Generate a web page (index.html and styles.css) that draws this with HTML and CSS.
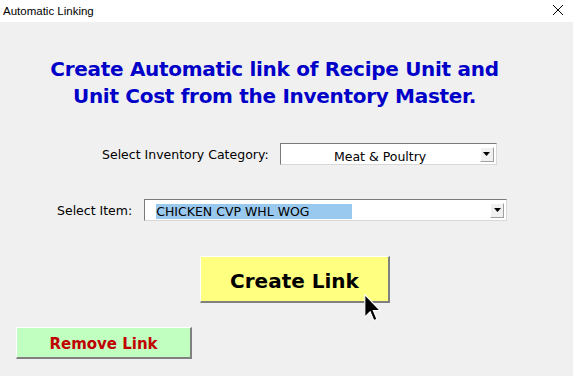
FILE: index.html
```html
<!DOCTYPE html>
<html lang="en">

<head>
    <meta charset="UTF-8">
    <meta name="viewport" content="width=device-width, initial-scale=1.0">
    <title>Automatic Linking</title>
    <link rel="stylesheet" href="styles.css">
</head>

<body>
    <div class="window">
        <div class="titlebar">
            <span class="title">Automatic Linking</span>
            <span class="close">
                <svg width="12" height="12" viewBox="0 0 12 12">
                    <path d="M1 1 L11 11 M11 1 L1 11" stroke="#000" stroke-width="1" fill="none" />
                </svg>
            </span>
        </div>

        <div class="content">
            <h1 class="heading">Create Automatic link of Recipe Unit and<br>Unit Cost from the Inventory Master.</h1>

            <div class="row row-category">
                <label class="label">Select Inventory Category:</label>
                <div class="combo combo-category">
                    <span class="combo-text centered">Meat &amp; Poultry</span>
                    <span class="drop"><svg width="7" height="4" viewBox="0 0 7 4"><path d="M0 0 H7 L3.5 4 Z" fill="#000" /></svg></span>
                </div>
            </div>

            <div class="row row-item">
                <label class="label">Select Item:</label>
                <div class="combo combo-item">
                    <span class="combo-text"><span class="selected">CHICKEN CVP WHL WOG</span></span>
                    <span class="drop"><svg width="7" height="4" viewBox="0 0 7 4"><path d="M0 0 H7 L3.5 4 Z" fill="#000" /></svg></span>
                </div>
            </div>

            <div class="create-wrap">
                <button class="btn btn-create">Create Link</button>
            </div>

            <button class="btn btn-remove">Remove Link</button>
        </div>

        <svg class="cursor" width="17" height="28" viewBox="0 0 12 20">
            <path d="M0.5 0.5 L0.5 16.5 L4.3 12.7 L7 19 L9.2 18 L6.6 11.8 L11.5 11.8 Z" fill="#000" stroke="#fff" stroke-width="0.8" stroke-linejoin="miter" />
        </svg>
    </div>
</body>

</html>
```

FILE: styles.css
```css
body {
    margin: 0;
    background-color: #f0f0f0;
    font-family: 'DejaVu Sans', Verdana, sans-serif;
}

.window {
    position: relative;
    width: 573px;
    height: 376px;
    overflow: hidden;
}

.titlebar {
    height: 22px;
    background-color: #fff;
    display: flex;
    align-items: center;
    justify-content: space-between;
    padding: 0 9px 0 3px;
}

.title {
    font-family: 'Liberation Sans', Arial, sans-serif;
    font-size: 11.5px;
    color: #000;
}

.close {
    display: flex;
    margin-top: -2px;
}

.content {
    padding-top: 34px;
}

.heading {
    margin: 0;
    width: 549px;
    text-align: center;
    font-size: 20px;
    line-height: 27px;
    letter-spacing: -0.3px;
    font-weight: bold;
    color: #0000c8;
}

.row {
    display: flex;
    align-items: center;
}

.row-category {
    margin: 33px 0 0 102px;
}

.row-item {
    margin: 34px 0 0 57px;
}

.label {
    font-family: 'DejaVu Sans', Tahoma, sans-serif;
    font-size: 12.5px;
    color: #000;
}

.combo {
    height: 22px;
    box-sizing: border-box;
    background-color: #fff;
    border: 1px solid #7a7a7a;
    border-right-color: #d8d8d8;
    border-bottom-color: #d8d8d8;
    display: flex;
    align-items: center;
    font-family: 'DejaVu Sans', Tahoma, sans-serif;
    font-size: 12.5px;
}

.combo-category {
    width: 217px;
    margin-left: 11px;
}

.combo-item {
    width: 363px;
    margin-left: 12px;
}

.combo-text {
    flex: 1;
}

.combo-text.centered {
    text-align: center;
    padding-top: 5px;
}

.selected {
    display: inline-block;
    margin-left: 11px;
    width: 196px;
    height: 15px;
    line-height: 16px;
    margin-top: 2px;
    background-color: #99c9ef;
}

.drop {
    width: 14px;
    height: 15px;
    margin-right: 2px;
    box-sizing: border-box;
    border: 1px solid #fff;
    border-right-color: #a0a0a0;
    border-bottom-color: #a0a0a0;
    background-color: #f0f0f0;
    display: flex;
    align-items: center;
    justify-content: center;
}

.create-wrap {
    margin: 35px 0 0 200px;
}

.btn {
    display: block;
    box-sizing: border-box;
    border: 1px solid #fff;
    border-right: 2px solid #808080;
    border-bottom: 2px solid #808080;
    font-family: 'DejaVu Sans', Tahoma, sans-serif;
    font-weight: bold;
    padding: 0;
}

.btn-create {
    width: 190px;
    height: 47px;
    background-color: #ffff80;
    color: #000;
    font-size: 20px;
    padding-top: 3px;
}

.btn-remove {
    margin: 24px 0 0 16px;
    width: 176px;
    height: 32px;
    background-color: #c0ffc0;
    color: #c00000;
    font-size: 15px;
    padding-top: 2px;
}

.cursor {
    position: absolute;
    left: 364px;
    top: 294px;
}
```
